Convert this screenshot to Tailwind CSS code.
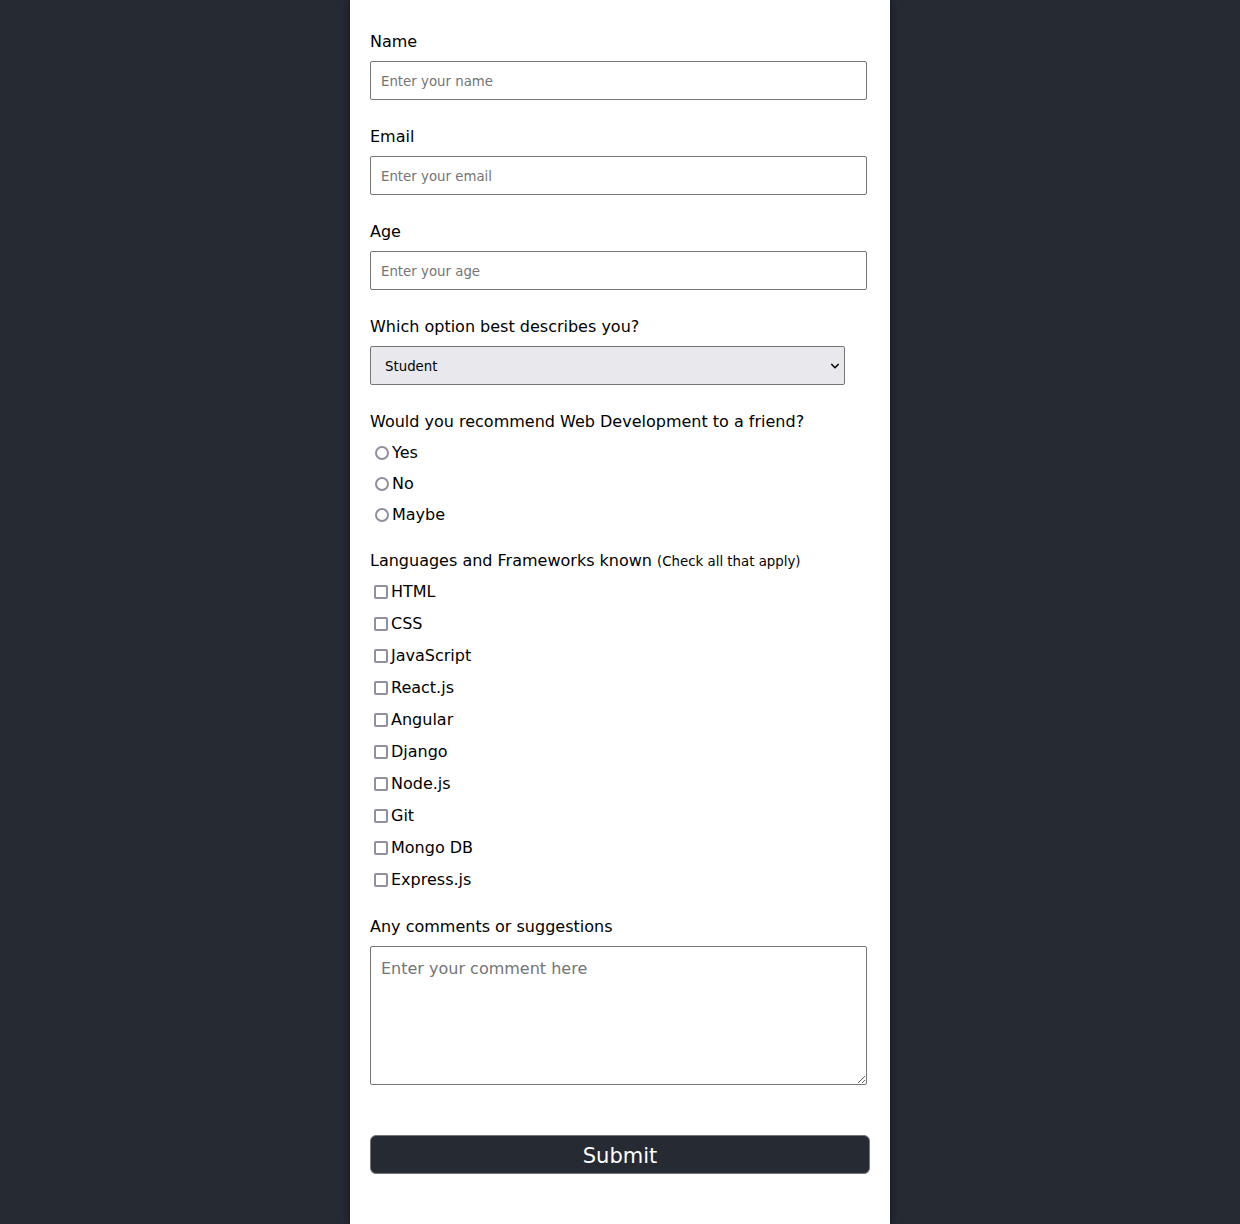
<!DOCTYPE html>
<html lang="en">
<head>
<meta charset="utf-8">
<meta name="viewport" content="width=device-width, initial-scale=1">
<title>Survey Form</title>
<script src="https://cdn.jsdelivr.net/npm/@tailwindcss/browser@4"></script>
</head>
<body class="bg-[#262a33] font-['DejaVu_Sans',Verdana,sans-serif] text-base leading-[22px] text-black">
<form class="mx-auto flex min-h-screen w-full max-w-[540px] flex-col gap-[26px] bg-white px-5 pt-[31px] pb-[50px] shadow-[0_0_10px_rgba(0,0,0,0.5)]">
  <div class="flex flex-col gap-2">
    <label for="name">Name</label>
    <input id="name" type="text" placeholder="Enter your name" class="h-[39px] w-[calc(100%-3px)] rounded-xs border border-[#767676] bg-white px-2.5 pt-0.5 text-[length:smaller] placeholder:text-[#757575]">
  </div>
  <div class="flex flex-col gap-2">
    <label for="email">Email</label>
    <input id="email" type="email" placeholder="Enter your email" class="h-[39px] w-[calc(100%-3px)] rounded-xs border border-[#767676] bg-white px-2.5 pt-0.5 text-[length:smaller] placeholder:text-[#757575]">
  </div>
  <div class="flex flex-col gap-2">
    <label for="age">Age</label>
    <input id="age" type="text" inputmode="numeric" placeholder="Enter your age" class="h-[39px] w-[calc(100%-3px)] rounded-xs border border-[#767676] bg-white px-2.5 pt-0.5 text-[length:smaller] placeholder:text-[#757575]">
  </div>
  <div class="flex flex-col gap-2">
    <label for="role">Which option best describes you?</label>
    <div class="relative w-[95%]">
      <select id="role" class="block h-[39px] w-full appearance-none rounded-xs border border-[#767676] bg-[#e9e9ed] px-3.5 pt-0.5 text-[length:smaller]">
        <option>Student</option>
        <option>Intern</option>
        <option>Professional</option>
        <option>Other</option>
      </select>
      <svg class="pointer-events-none absolute top-4 right-1.5 h-2 w-2" viewBox="0 0 8 8" fill="none" stroke="black" stroke-width="1.6" aria-hidden="true"><path d="M0.3 2 4 5.7 7.7 2"/></svg>
    </div>
  </div>
  <fieldset class="-mb-0.5 flex flex-col gap-[9px]">
    <legend class="mb-[9px]">Would you recommend Web Development to a friend?</legend>
    <label class="flex items-center gap-[3px] pl-[5px]"><input type="radio" name="recommend" class="size-3.5 appearance-none rounded-full border-2 border-[#8f8f9d] bg-white checked:bg-[#0060df]">Yes</label>
    <label class="flex items-center gap-[3px] pl-[5px]"><input type="radio" name="recommend" class="size-3.5 appearance-none rounded-full border-2 border-[#8f8f9d] bg-white checked:bg-[#0060df]">No</label>
    <label class="flex items-center gap-[3px] pl-[5px]"><input type="radio" name="recommend" class="size-3.5 appearance-none rounded-full border-2 border-[#8f8f9d] bg-white checked:bg-[#0060df]">Maybe</label>
  </fieldset>
  <fieldset class="-mb-px flex flex-col gap-2.5">
    <legend class="mb-[9px]">Languages and Frameworks known <small class="text-[length:smaller] leading-none">(Check all that apply)</small></legend>
    <label class="flex items-center gap-[3px] pl-1"><input type="checkbox" class="size-3.5 appearance-none rounded-xs border-2 border-[#8f8f9d] bg-white checked:bg-[#0060df]">HTML</label>
    <label class="flex items-center gap-[3px] pl-1"><input type="checkbox" class="size-3.5 appearance-none rounded-xs border-2 border-[#8f8f9d] bg-white checked:bg-[#0060df]">CSS</label>
    <label class="flex items-center gap-[3px] pl-1"><input type="checkbox" class="size-3.5 appearance-none rounded-xs border-2 border-[#8f8f9d] bg-white checked:bg-[#0060df]">JavaScript</label>
    <label class="flex items-center gap-[3px] pl-1"><input type="checkbox" class="size-3.5 appearance-none rounded-xs border-2 border-[#8f8f9d] bg-white checked:bg-[#0060df]">React.js</label>
    <label class="flex items-center gap-[3px] pl-1"><input type="checkbox" class="size-3.5 appearance-none rounded-xs border-2 border-[#8f8f9d] bg-white checked:bg-[#0060df]">Angular</label>
    <label class="flex items-center gap-[3px] pl-1"><input type="checkbox" class="size-3.5 appearance-none rounded-xs border-2 border-[#8f8f9d] bg-white checked:bg-[#0060df]">Django</label>
    <label class="flex items-center gap-[3px] pl-1"><input type="checkbox" class="size-3.5 appearance-none rounded-xs border-2 border-[#8f8f9d] bg-white checked:bg-[#0060df]">Node.js</label>
    <label class="flex items-center gap-[3px] pl-1"><input type="checkbox" class="size-3.5 appearance-none rounded-xs border-2 border-[#8f8f9d] bg-white checked:bg-[#0060df]">Git</label>
    <label class="flex items-center gap-[3px] pl-1"><input type="checkbox" class="size-3.5 appearance-none rounded-xs border-2 border-[#8f8f9d] bg-white checked:bg-[#0060df]">Mongo DB</label>
    <label class="flex items-center gap-[3px] pl-1"><input type="checkbox" class="size-3.5 appearance-none rounded-xs border-2 border-[#8f8f9d] bg-white checked:bg-[#0060df]">Express.js</label>
  </fieldset>
  <div class="flex flex-col gap-2">
    <label for="comments">Any comments or suggestions</label>
    <textarea id="comments" placeholder="Enter your comment here" class="h-[139px] w-[calc(100%-3px)] resize rounded-xs border border-[#767676] bg-white px-2.5 py-[11px] placeholder:text-[#757575]"></textarea>
  </div>
  <button type="submit" class="mt-6 h-[39px] w-full rounded-md border border-[#767676] bg-[#262a33] pt-0.5 text-[21px] text-white">Submit</button>
</form>
</body>
</html>
